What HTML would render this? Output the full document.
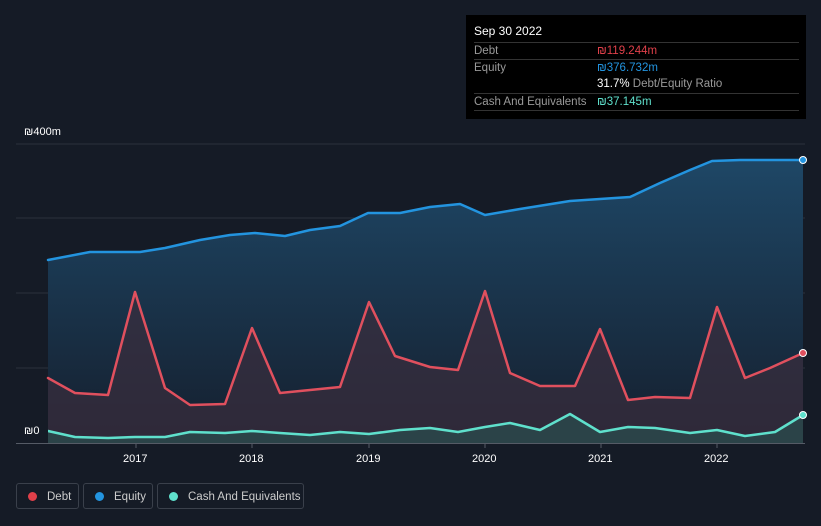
<!DOCTYPE html>
<html><head><meta charset="utf-8"><style>
body{margin:0;width:821px;height:526px;background:#151b26;font-family:"Liberation Sans",sans-serif;overflow:hidden;position:relative}
.tt{position:absolute;left:466px;top:15px;width:340px;height:104px;background:#000;color:#fff;font-size:11.5px}
.tt .h{position:absolute;left:8px;top:9px;font-size:12px}
.row{position:absolute;left:8px;width:325px;height:17px;border-top:1px solid #333;color:#999;line-height:17px}
.row span{position:absolute;left:123px}
.lg{position:absolute;top:483px;height:26px;border:1px solid #3a404b;border-radius:3px;color:#ccc;font-size:11.5px;line-height:26px;box-sizing:border-box}
.lg i{display:inline-block;width:9px;height:9px;border-radius:50%;margin:0 10px 0 11px;vertical-align:-1px}
.ax{position:absolute;color:#fff;font-size:11px}
</style></head><body>
<svg width="821" height="526" style="position:absolute;left:0;top:0">
<defs><linearGradient id="g" x1="0" y1="0" x2="0" y2="1"><stop offset="0" stop-color="#1e4766"/><stop offset="1" stop-color="#151f2e"/></linearGradient></defs>
<g stroke="#2a313c" stroke-width="1"><line x1="16" y1="144" x2="805" y2="144"/><line x1="16" y1="218" x2="805" y2="218"/><line x1="16" y1="293" x2="805" y2="293"/><line x1="16" y1="368" x2="805" y2="368"/></g>
<polygon fill="url(#g)" points="48,443 48,260 90,252 140,252 165,248 200,240 230,235 255,233 285,236 310,230 340,226 368,213 400,213 430,207 460,204 485,215 520,209 570,201 600,199 630,197 660,183 690,170 712,161 740,160 803,160 803,443"/>
<polygon fill="#3a2d3d" opacity="0.7" points="48,443 48,378 75,393 108,395 135,292 165,388 190,405 225,404 252,328 280,393 310,390 340,387 369,302 395,356 430,367 458,370 485,291 510,373 540,386 575,386 600,329 628,400 655,397 690,398 717,307 745,378 770,368 803,353 803,443"/>
<polygon fill="#2a4a4c" opacity="0.8" points="48,443 48,431 75,437 108,438 135,437 165,437 190,432 225,433 252,431 280,433 310,435 340,432 369,434 400,430 430,428 458,432 485,427 510,423 540,430 570,414 600,432 628,427 655,428 690,433 717,430 745,436 775,432 803,415 803,443"/>
<g fill="none" stroke-width="2.5" stroke-linejoin="round" stroke-linecap="round">
<polyline stroke="#2394df" points="48,260 90,252 140,252 165,248 200,240 230,235 255,233 285,236 310,230 340,226 368,213 400,213 430,207 460,204 485,215 520,209 570,201 600,199 630,197 660,183 690,170 712,161 740,160 803,160"/>
<polyline stroke="#e0505e" points="48,378 75,393 108,395 135,292 165,388 190,405 225,404 252,328 280,393 310,390 340,387 369,302 395,356 430,367 458,370 485,291 510,373 540,386 575,386 600,329 628,400 655,397 690,398 717,307 745,378 770,368 803,353"/>
<polyline stroke="#5fe0cc" points="48,431 75,437 108,438 135,437 165,437 190,432 225,433 252,431 280,433 310,435 340,432 369,434 400,430 430,428 458,432 485,427 510,423 540,430 570,414 600,432 628,427 655,428 690,433 717,430 745,436 775,432 803,415"/>
</g>
<rect x="16" y="421" width="32" height="22" fill="#151b26"/>
<line x1="16" y1="443.5" x2="805" y2="443.5" stroke="#555b66"/>
<g stroke="#555b66"><line x1="136" y1="443" x2="136" y2="448"/><line x1="252" y1="443" x2="252" y2="448"/><line x1="369" y1="443" x2="369" y2="448"/><line x1="485" y1="443" x2="485" y2="448"/><line x1="601" y1="443" x2="601" y2="448"/><line x1="717" y1="443" x2="717" y2="448"/></g>
<circle cx="803" cy="160" r="3.5" fill="#2394df" stroke="#fff" stroke-width="1"/>
<circle cx="803" cy="353" r="3.5" fill="#e0505e" stroke="#fff" stroke-width="1"/>
<circle cx="803" cy="415" r="3.5" fill="#5fe0cc" stroke="#fff" stroke-width="1"/>
</svg>
<div class="ax" style="left:24px;top:126px">₪400m</div>
<div class="ax" style="left:24px;top:425px">₪0</div>
<div class="ax" style="left:123px;top:451px;top:453px">2017</div>
<div class="ax" style="left:239px;top:453px">2018</div>
<div class="ax" style="left:356px;top:453px">2019</div>
<div class="ax" style="left:472px;top:453px">2020</div>
<div class="ax" style="left:588px;top:453px">2021</div>
<div class="ax" style="left:704px;top:453px">2022</div>
<div class="tt">
<div class="h">Sep 30 2022</div>
<div class="row" style="top:27px">Debt<span style="color:#e0404a">₪119.244m</span></div>
<div class="row" style="top:44px">Equity<span style="color:#2394df">₪376.732m</span></div>
<div class="row" style="top:61px;border-top:none"><span style="color:#999"><b style="color:#fff;font-weight:normal">31.7%</b> Debt/Equity Ratio</span></div>
<div class="row" style="top:78px">Cash And Equivalents<span style="color:#5fe0cc">₪37.145m</span></div>
<div class="row" style="top:95px;height:0"></div>
</div>
<div class="lg" style="left:16px;width:63px"><i style="background:#e0404a"></i>Debt</div>
<div class="lg" style="left:83px;width:70px"><i style="background:#2394df"></i>Equity</div>
<div class="lg" style="left:157px;width:147px"><i style="background:#5fe0cc"></i>Cash And Equivalents</div>
</body></html>
